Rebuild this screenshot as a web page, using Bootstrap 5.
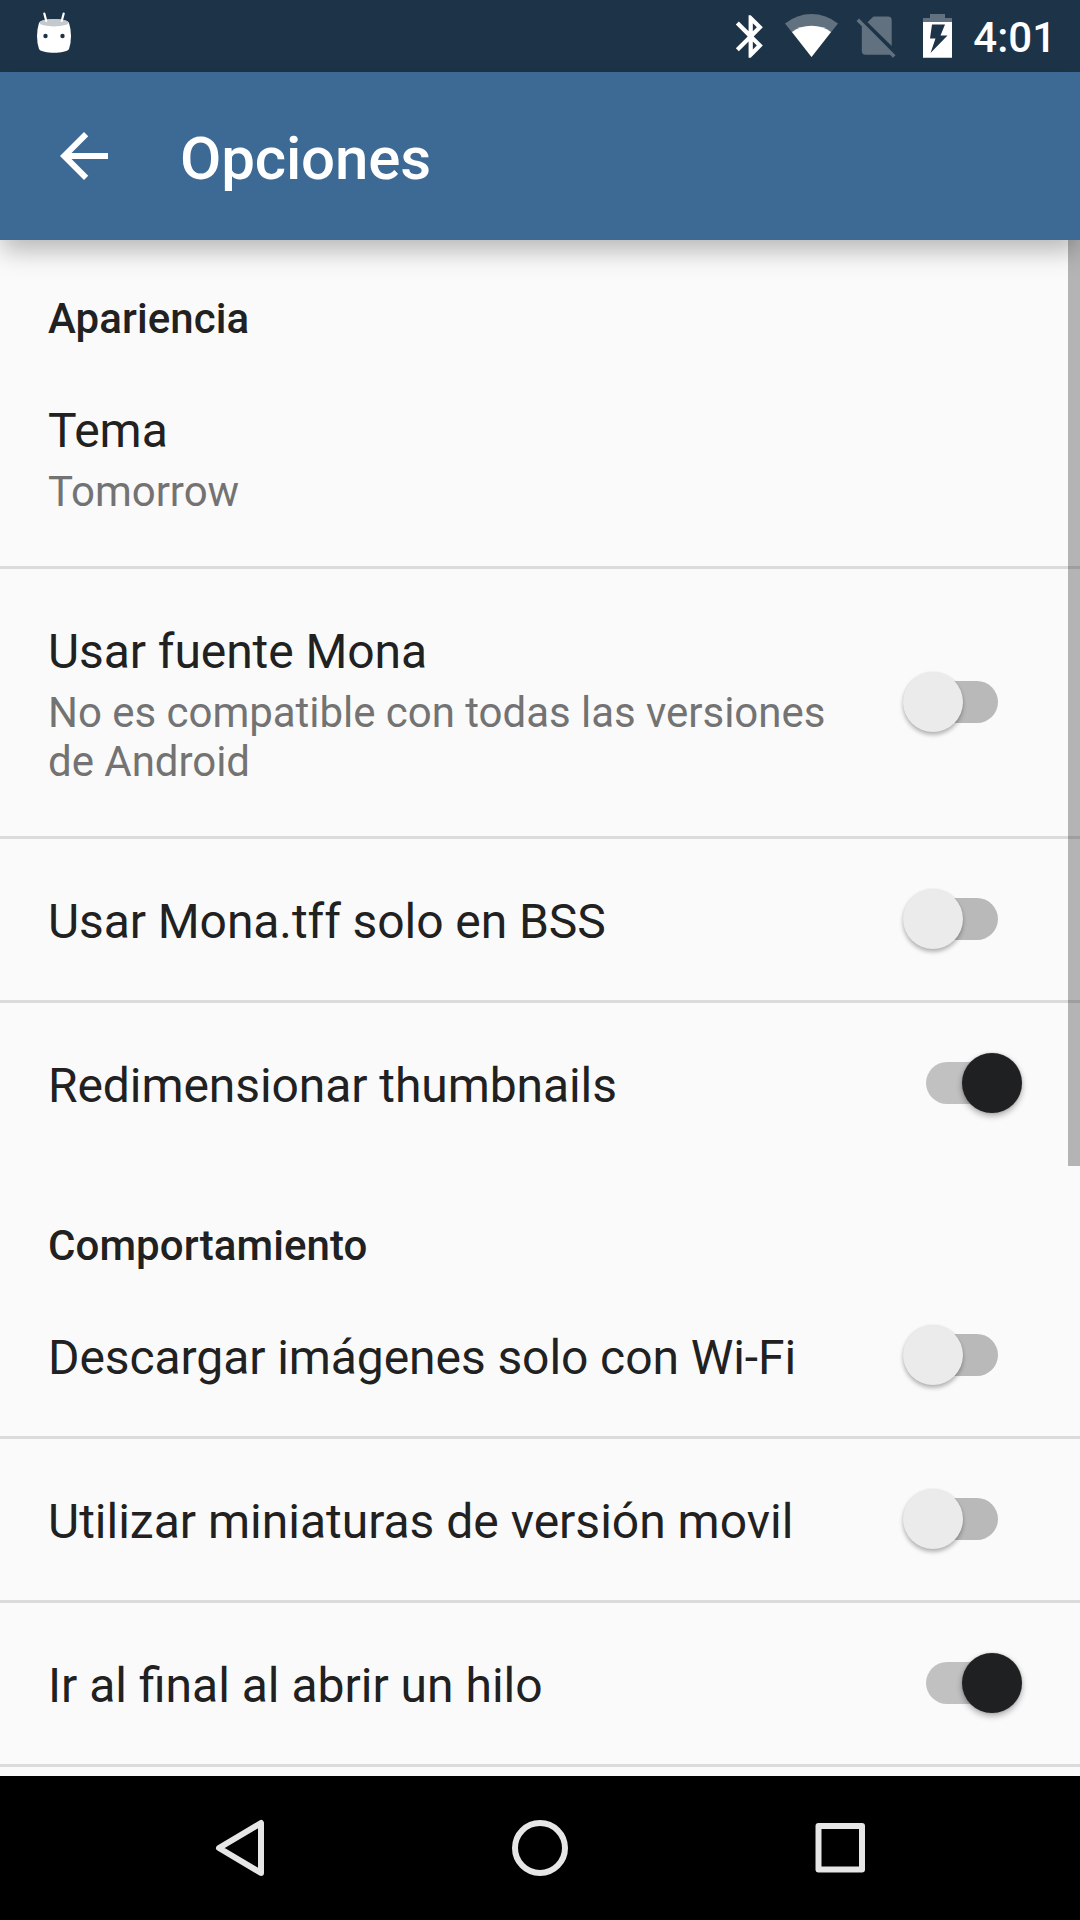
<!DOCTYPE html>
<html lang="es">
<head>
<meta charset="utf-8">
<meta name="viewport" content="width=device-width, initial-scale=1">
<title>Opciones</title>
<link href="https://cdn.jsdelivr.net/npm/bootstrap@5.3.0/dist/css/bootstrap.min.css" rel="stylesheet">
<style>
body{font-family:Roboto,"Noto Sans",sans-serif;background:#fafafa;color:#212121;width:1080px;height:1920px}
.statusbar{height:72px;background:#1d3347;padding:0 24px 0 36px}
.statusbar svg,.appbar svg,.softkeys svg{display:block}
.droid{margin-top:-4px}
.clock{font-size:42px;line-height:49px;font-weight:500;padding-top:3px;margin-left:15px}
.appbar{height:168px;background:#3c6a94;padding-left:48px;box-shadow:0 12px 24px -2px rgba(0,0,0,.28);z-index:2}
.appbar h1{font-size:60px;line-height:71px;font-weight:500;letter-spacing:-.15px;margin:5px 0 0 60px}
.settings{height:1536px}
.section-title{font-size:42px;line-height:49px;font-weight:500;letter-spacing:.09px;margin:0;padding:54px 48px 5px}
.pref{padding:55px 58px 50px 48px;border-bottom:3px solid #dbdbdb}
.pref.plain{border-color:transparent}
.pref-copy{width:800px}
.pref-title{font-size:48px;line-height:56px;letter-spacing:-.08px}
.pref-title.natural{letter-spacing:normal}
.pref-note{font-size:42px;line-height:49px;letter-spacing:-.03px;color:#737373;margin-top:8px}
.toggle{display:grid;align-items:center;width:120px;height:60px;margin:-6.5px 0 -.5px}
.toggle::before,.toggle::after{content:"";grid-area:1/1}
.toggle::before{width:72px;height:42px;border-radius:21px;background:#b9b9b9;justify-self:center}
.toggle::after{width:60px;height:60px;margin-left:.5px;border-radius:50%;background:#ebebeb;box-shadow:0 3px 4px rgba(0,0,0,.28),0 0 2px rgba(0,0,0,.08)}
.toggle.on::before{background:#c1c1c1}
.toggle.on::after{background:#1f2022;justify-self:end;margin:0 .5px 0 0;box-shadow:0 3px 6px rgba(0,0,0,.32),0 0 2px rgba(0,0,0,.2)}
.scroll-thumb{width:12px;height:926px;background:rgba(0,0,0,.28)}
.softkeys{height:144px;background:#000;padding:0 202px}
</style>
</head>
<body class="d-flex flex-column overflow-hidden m-0">
<header class="statusbar d-flex align-items-center text-white flex-shrink-0">
  <svg width="36" height="44" viewBox="36 12 36 44" class="droid me-auto">
    <path d="M39 23C42 18 66 18 69 23Q71 29 71 36T69 49C66 54 42 54 39 49Q37 43 37 36T39 23Z" fill="#fff"/>
    <ellipse cx="54" cy="22.700" rx="14.500" ry="3.700" fill="#c3c9cc"/>
    <path d="M44.300 13.500l2 7.500M63.700 13.500l-2 7.500" stroke="#fff" stroke-width="2.200" stroke-linecap="round"/>
    <circle cx="45.500" cy="36" r="2.200" fill="#1d3347"/><circle cx="62.500" cy="36" r="2.200" fill="#1d3347"/>
  </svg>
  <svg width="226" height="48" viewBox="732 12 226 48">
    <path transform="translate(725.200 10.900) scale(2.125)" fill="#fff" d="M17.710 7.710L12 2h-1v7.590L6.410 5 5 6.410 10.590 12 5 17.590 6.410 19 11 14.410V22h1l5.710-5.710-4.300-4.290 4.300-4.290zM13 5.830l1.880 1.880L13 9.590V5.830zm1.880 10.460L13 18.170v-3.760l1.880 1.880z"/>
    <path fill="#61717f" d="M785 23.500Q797 14 811.500 14T838 23.500L811.500 57Z"/>
    <path fill="#fff" d="M792 32Q800 25.700 811.500 25.700T831 32L811.500 57Z"/>
    <path fill="#61717f" d="M873.500 16.500H888q3.700 0 3.700 3.700V46L867.500 22.300ZM859 18.500L895.500 55.200 893 57.700 890 54.700H865.500q-3.700 0-3.700-3.700V26.300L856.500 21Z"/>
    <path fill="#61717f" d="M923 22.500V18H930V14H945V18H952V22.500Z"/>
    <path fill="#fff" fill-rule="evenodd" d="M923 22H952V57.700H923ZM932 24.500L930 38.500H935.500L930.500 53 947.500 35.500H940.500L945 24.500Z"/>
  </svg>
  <span class="clock">4:01</span>
</header>
<nav class="appbar d-flex align-items-center text-white position-relative flex-shrink-0">
  <svg width="72" height="72" viewBox="0 0 24 24" fill="#fff"><path d="M20 11H7.830l5.590-5.590L12 4l-8 8 8 8 1.410-1.410L7.830 13H20v-2z"/></svg>
  <h1>Opciones</h1>
</nav>
<main class="settings position-relative overflow-hidden flex-shrink-0">
  <section>
    <h2 class="section-title">Apariencia</h2>
    <div class="pref"><div class="pref-title">Tema</div><div class="pref-note">Tomorrow</div></div>
    <div class="pref d-flex align-items-center justify-content-between">
      <div class="pref-copy"><div class="pref-title">Usar fuente Mona</div><div class="pref-note">No es compatible con todas las versiones de Android</div></div>
      <span class="toggle" role="switch" aria-checked="false"></span>
    </div>
    <div class="pref d-flex align-items-center justify-content-between"><div class="pref-title">Usar Mona.tff solo en BSS</div><span class="toggle" role="switch" aria-checked="false"></span></div>
    <div class="pref plain d-flex align-items-center justify-content-between"><div class="pref-title">Redimensionar thumbnails</div><span class="toggle on" role="switch" aria-checked="true"></span></div>
  </section>
  <section>
    <h2 class="section-title">Comportamiento</h2>
    <div class="pref d-flex align-items-center justify-content-between"><div class="pref-title">Descargar imágenes solo con Wi-Fi</div><span class="toggle" role="switch" aria-checked="false"></span></div>
    <div class="pref d-flex align-items-center justify-content-between"><div class="pref-title natural">Utilizar miniaturas de versión movil</div><span class="toggle" role="switch" aria-checked="false"></span></div>
    <div class="pref d-flex align-items-center justify-content-between"><div class="pref-title natural">Ir al final al abrir un hilo</div><span class="toggle on" role="switch" aria-checked="true"></span></div>
  </section>
  <div class="scroll-thumb position-absolute top-0 end-0"></div>
</main>
<footer class="softkeys d-flex align-items-center justify-content-between flex-shrink-0">
  <svg width="76" height="60" viewBox="202 1818 76 60" fill="none" stroke="#e6e6e6" stroke-width="6" stroke-linejoin="round"><path d="M261 1823V1873L219 1848Z"/></svg>
  <svg width="60" height="60" viewBox="0 0 60 60" fill="none" stroke="#e6e6e6" stroke-width="6"><circle cx="30" cy="30" r="25"/></svg>
  <svg width="76" height="60" viewBox="802 1818 76 60" fill="none" stroke="#e6e6e6" stroke-width="6" stroke-linejoin="round"><path d="M818.500 1826H862V1869.500H818.500Z"/></svg>
</footer>
<script src="https://cdn.jsdelivr.net/npm/bootstrap@5.3.0/dist/js/bootstrap.bundle.min.js"></script>
</body>
</html>
